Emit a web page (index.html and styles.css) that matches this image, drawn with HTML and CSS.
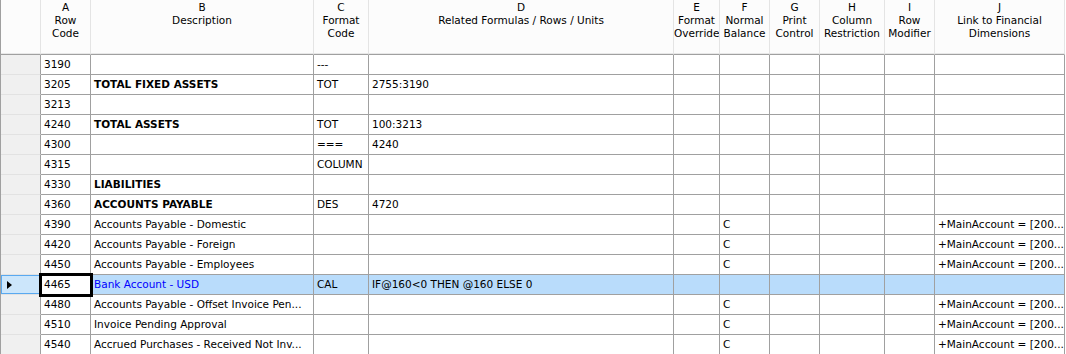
FILE: index.html
```html
<!DOCTYPE html>
<html>
<head>
<meta charset="utf-8">
<link rel="stylesheet" href="styles.css">
</head>
<body>
<div class="sheet">
  <div class="row head">
    <div class="hc corner"></div>
    <div class="hc">A<br>Row<br>Code</div>
    <div class="hc">B<br>Description</div>
    <div class="hc">C<br>Format<br>Code</div>
    <div class="hc">D<br>Related Formulas / Rows / Units</div>
    <div class="hc">E<br>Format<br>Override</div>
    <div class="hc">F<br>Normal<br>Balance</div>
    <div class="hc">G<br>Print<br>Control</div>
    <div class="hc">H<br>Column<br>Restriction</div>
    <div class="hc">I<br>Row<br>Modifier</div>
    <div class="hc">J<br>Link to Financial<br>Dimensions</div>
  </div>

  <div class="row"><div class="rh"></div><div class="c">3190</div><div class="c"></div><div class="c">---</div><div class="c"></div><div class="c"></div><div class="c"></div><div class="c"></div><div class="c"></div><div class="c"></div><div class="c"></div></div>
  <div class="row"><div class="rh"></div><div class="c">3205</div><div class="c b">TOTAL FIXED ASSETS</div><div class="c">TOT</div><div class="c">2755:3190</div><div class="c"></div><div class="c"></div><div class="c"></div><div class="c"></div><div class="c"></div><div class="c"></div></div>
  <div class="row"><div class="rh"></div><div class="c">3213</div><div class="c"></div><div class="c"></div><div class="c"></div><div class="c"></div><div class="c"></div><div class="c"></div><div class="c"></div><div class="c"></div><div class="c"></div></div>
  <div class="row"><div class="rh"></div><div class="c">4240</div><div class="c b">TOTAL ASSETS</div><div class="c">TOT</div><div class="c">100:3213</div><div class="c"></div><div class="c"></div><div class="c"></div><div class="c"></div><div class="c"></div><div class="c"></div></div>
  <div class="row"><div class="rh"></div><div class="c">4300</div><div class="c"></div><div class="c">===</div><div class="c">4240</div><div class="c"></div><div class="c"></div><div class="c"></div><div class="c"></div><div class="c"></div><div class="c"></div></div>
  <div class="row"><div class="rh"></div><div class="c">4315</div><div class="c"></div><div class="c">COLUMN</div><div class="c"></div><div class="c"></div><div class="c"></div><div class="c"></div><div class="c"></div><div class="c"></div><div class="c"></div></div>
  <div class="row"><div class="rh"></div><div class="c">4330</div><div class="c b">LIABILITIES</div><div class="c"></div><div class="c"></div><div class="c"></div><div class="c"></div><div class="c"></div><div class="c"></div><div class="c"></div><div class="c"></div></div>
  <div class="row"><div class="rh"></div><div class="c">4360</div><div class="c b">ACCOUNTS PAYABLE</div><div class="c">DES</div><div class="c">4720</div><div class="c"></div><div class="c"></div><div class="c"></div><div class="c"></div><div class="c"></div><div class="c"></div></div>
  <div class="row"><div class="rh"></div><div class="c">4390</div><div class="c">Accounts Payable - Domestic</div><div class="c"></div><div class="c"></div><div class="c"></div><div class="c">C</div><div class="c"></div><div class="c"></div><div class="c"></div><div class="c">+MainAccount = [200...</div></div>
  <div class="row"><div class="rh"></div><div class="c">4420</div><div class="c">Accounts Payable - Foreign</div><div class="c"></div><div class="c"></div><div class="c"></div><div class="c">C</div><div class="c"></div><div class="c"></div><div class="c"></div><div class="c">+MainAccount = [200...</div></div>
  <div class="row"><div class="rh"></div><div class="c">4450</div><div class="c">Accounts Payable - Employees</div><div class="c"></div><div class="c"></div><div class="c"></div><div class="c">C</div><div class="c"></div><div class="c"></div><div class="c"></div><div class="c">+MainAccount = [200...</div></div>
  <div class="row sel"><div class="rh cur"><span class="tri"></span></div><div class="c active">4465</div><div class="c blue">Bank Account - USD</div><div class="c">CAL</div><div class="c">IF@160&lt;0 THEN @160 ELSE 0</div><div class="c"></div><div class="c"></div><div class="c"></div><div class="c"></div><div class="c"></div><div class="c"></div></div>
  <div class="row"><div class="rh"></div><div class="c">4480</div><div class="c">Accounts Payable - Offset Invoice Pen...</div><div class="c"></div><div class="c"></div><div class="c"></div><div class="c">C</div><div class="c"></div><div class="c"></div><div class="c"></div><div class="c">+MainAccount = [200...</div></div>
  <div class="row"><div class="rh"></div><div class="c">4510</div><div class="c">Invoice Pending Approval</div><div class="c"></div><div class="c"></div><div class="c"></div><div class="c">C</div><div class="c"></div><div class="c"></div><div class="c"></div><div class="c">+MainAccount = [200...</div></div>
  <div class="row"><div class="rh"></div><div class="c">4540</div><div class="c">Accrued Purchases - Received Not Inv...</div><div class="c"></div><div class="c"></div><div class="c"></div><div class="c">C</div><div class="c"></div><div class="c"></div><div class="c"></div><div class="c">+MainAccount = [200...</div></div>
</div>
</body>
</html>
```

FILE: styles.css
```css
html, body {
  margin: 0;
  padding: 0;
  background: #ffffff;
}
body {
  font-family: "DejaVu Sans", "Liberation Sans", sans-serif;
  font-size: 10.5px;
  color: #000;
  overflow: hidden;
}
.sheet {
  width: 1064px;
  border-left: 1px solid #a0a0a0;
}
.row {
  display: grid;
  grid-template-columns: 40px 50px 223px 55px 305px 46px 50px 50px 65px 50px 130px;
  height: 20px;
}
.row.head {
  height: 55px;
}
.hc {
  box-sizing: border-box;
  background: #fcfcfc;
  border-right: 1px solid #e4e4e4;
  border-bottom: 1px solid #a0a0a0;
  box-shadow: inset 0 -1px 0 #e8e8e8;
  text-align: center;
  line-height: 13px;
  padding-top: 1px;
  white-space: nowrap;
  overflow: hidden;
  color: #000;
}
.hc.corner {
  border-right: 1px solid #e4e4e4;
}
.rh {
  box-sizing: border-box;
  background: #f0f0f0;
  border-right: 1px solid #a0a0a0;
  border-bottom: 1px solid #e2e2e2;
  position: relative;
}
.c {
  box-sizing: border-box;
  border-right: 1px solid #a0a0a0;
  border-bottom: 1px solid #a0a0a0;
  padding: 0 3px;
  line-height: 19px;
  white-space: nowrap;
  overflow: hidden;
}
.b {
  font-weight: bold;
}
.sel .c {
  background: #b9dcfb;
}
.sel .c.active {
  background: #ffffff;
  outline: 3px solid #000;
  outline-offset: -1px;
  position: relative;
  z-index: 2;
  overflow: visible;
}
.sel .c.blue {
  color: #0000ff;
}
.rh.cur {
  background: #cce6fb;
  box-shadow: inset 0 0 0 1px #59a9f0;
}
.tri {
  position: absolute;
  left: 6px;
  top: 6px;
  width: 0;
  height: 0;
  border-top: 4px solid transparent;
  border-bottom: 4px solid transparent;
  border-left: 5px solid #000;
}
```
